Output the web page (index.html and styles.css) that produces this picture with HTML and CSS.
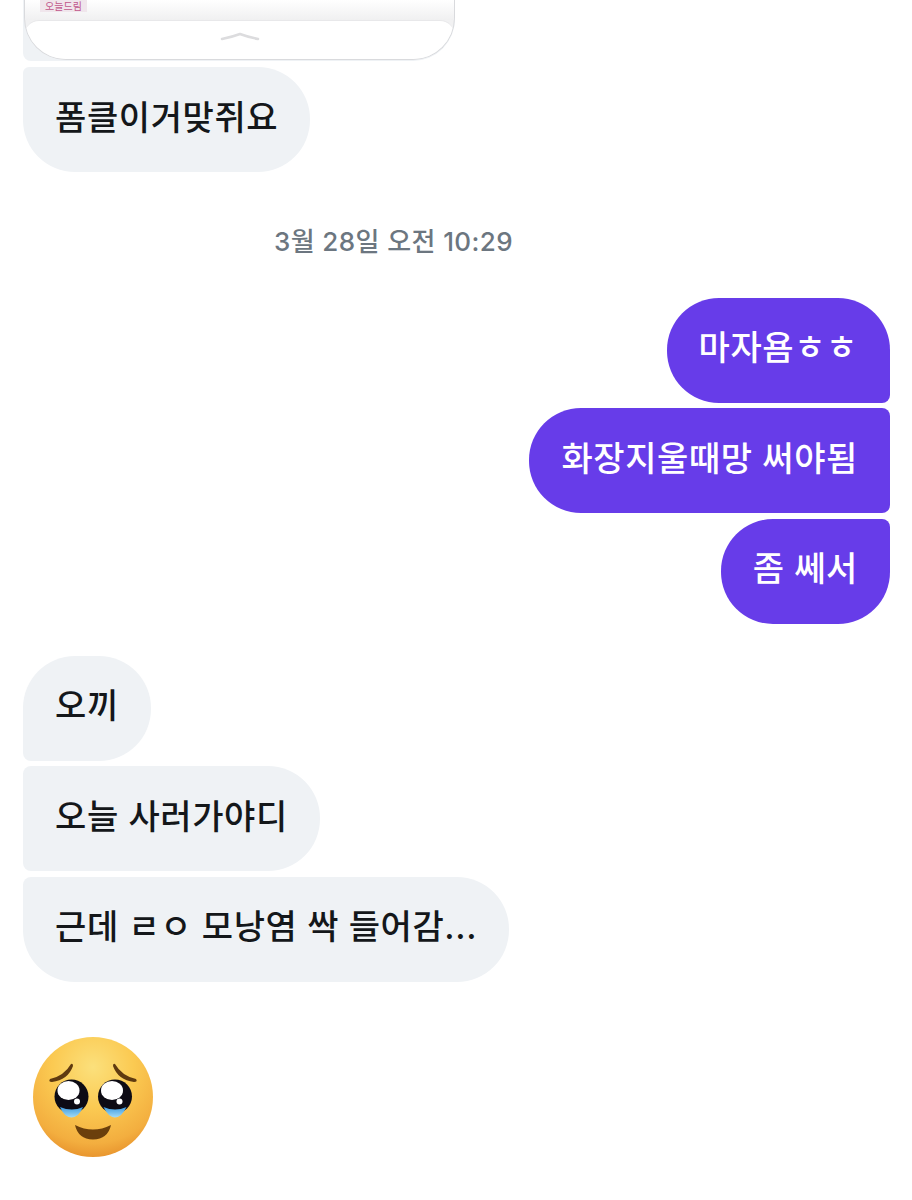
FILE: index.html
```html
<!DOCTYPE html>
<html lang="ko">

<head>
    <meta charset="UTF-8">
    <meta name="viewport" content="width=device-width, initial-scale=1.0">
    <title>Messages</title>
    <link rel="stylesheet" href="styles.css">
</head>

<body>
    <div class="chat">
        <div class="shared-message">
            <div class="shared-card">
                <div class="card-top">
                    <span class="card-tag">오늘드림</span>
                </div>
                <div class="card-handle">
                    <svg width="40" height="10" viewBox="0 0 40 10">
                        <path d="M2 7 Q12 5 20 2 Q28 5 38 7" fill="none" stroke="#dcdcde" stroke-width="2.5" stroke-linecap="round"/>
                    </svg>
                </div>
            </div>
        </div>

        <div class="bubble them first">폼클이거맞쥐요</div>

        <div class="timestamp">3월 28일 오전 10:29</div>

        <div class="group me">
            <div class="bubble mine top">마자욤ㅎㅎ</div>
            <div class="bubble mine mid">화장지울때망 써야됨</div>
            <div class="bubble mine last">좀 쎄서</div>
        </div>

        <div class="group them-group">
            <div class="bubble them top">오끼</div>
            <div class="bubble them mid">오늘 사러가야디</div>
            <div class="bubble them last">근데 ㄹㅇ 모낭염 싹 들어감...</div>
        </div>

        <svg class="emoji" width="124" height="124" viewBox="0 0 124 124">
            <defs>
                <radialGradient id="face" cx="50%" cy="25%" r="75%">
                    <stop offset="0" stop-color="#fbe07c"/>
                    <stop offset="0.45" stop-color="#fbca52"/>
                    <stop offset="0.85" stop-color="#f3ae3f"/>
                    <stop offset="1" stop-color="#e9962f"/>
                </radialGradient>
                <linearGradient id="tear" x1="0" y1="0" x2="0" y2="1">
                    <stop offset="0" stop-color="#3f9be0"/>
                    <stop offset="1" stop-color="#a4dcf5"/>
                </linearGradient>
            </defs>
            <circle cx="62" cy="62" r="60" fill="url(#face)"/>
            <!-- brows -->
            <path d="M19 44 Q33 41 40 29 Q42 28 42 31 Q37 45 21 47 Q17 47 19 44Z" fill="#5f3a10"/>
            <path d="M105 44 Q91 41 84 29 Q82 28 82 31 Q87 45 103 47 Q107 47 105 44Z" fill="#5f3a10"/>
            <!-- eyes -->
            <circle cx="40.5" cy="61.5" r="17" fill="#0d0b14"/>
            <path d="M29 72 Q41 77 52 72 Q48 82 40.5 82.5 Q33 82 29 72Z" fill="url(#tear)"/>
            <ellipse cx="37.5" cy="55.5" rx="11" ry="9.5" fill="#fff"/>
            <circle cx="46" cy="66.5" r="3" fill="#fff"/>
            <circle cx="84" cy="61.5" r="17" fill="#0d0b14"/>
            <path d="M72.500 72 Q84 77 95.500 72 Q91 82 84 82.500 Q77 82 72.500 72Z" fill="url(#tear)"/>
            <ellipse cx="81" cy="55.5" rx="11" ry="9.5" fill="#fff"/>
            <circle cx="88.500" cy="66.5" r="3" fill="#fff"/>
            <!-- mouth -->
            <path d="M44 90 Q62 99 80 90 Q77 104 62 104.500 Q47 104 44 90Z" fill="#6b3f0c"/>
        </svg>
    </div>
</body>

</html>
```

FILE: styles.css
```css
/* Global Styles */
html,
body {
    margin: 0;
    height: 1200px;
    overflow: hidden;
    background-color: #fff;
}

body {
    font-family: 'Inter', 'Noto Sans CJK KR', sans-serif;
}

.chat {
    display: flex;
    flex-direction: column;
    padding: 0 22px 0 23px;
}

/* Shared card at the top */
.shared-message {
    width: 432px;
    height: 61px;
    box-sizing: border-box;
    padding-left: 1px;
    background-color: #eff2f5;
    border-radius: 0 0 42px 8px;
}

.shared-card {
    height: 60px;
    box-sizing: border-box;
    border: 1px solid #d9dadd;
    border-top: none;
    border-radius: 0 0 42px 42px;
    background-color: #f1f1f2;
    overflow: hidden;
}

.card-top {
    height: 20px;
    padding-left: 15px;
    background: linear-gradient(to bottom, #fff, #f0f0f1);
}

.card-tag {
    display: block;
    width: 47px;
    height: 12px;
    background-color: #f0e6ec;
    color: #c0568b;
    font-size: 10px;
    line-height: 12px;
    text-align: center;
}

.card-handle {
    display: flex;
    justify-content: center;
    height: 39px;
    box-sizing: border-box;
    padding-top: 11px;
    background-color: #fff;
    border-top: 1px solid #e8e8ea;
    border-radius: 14px 14px 0 0;
}

/* Bubbles */
.bubble {
    box-sizing: border-box;
    height: 105px;
    padding: 0 32px 4px;
    display: flex;
    align-items: center;
    width: fit-content;
    font-size: 34px;
    font-weight: 500;
    letter-spacing: 0.6px;
    line-height: 1;
    white-space: nowrap;
}

.them {
    background-color: #eff2f5;
    color: #14171a;
}

.mine {
    background-color: #673ce9;
    color: #fff;
}

.first {
    margin-top: 6px;
    border-radius: 6px 52px 52px 52px;
}

.timestamp {
    margin-top: 53px;
    height: 34px;
    line-height: 34px;
    text-align: center;
    color: #6c7680;
    font-size: 26px;
    font-weight: 500;
    letter-spacing: 0.4px;
    padding-right: 126px;
}

.group {
    display: flex;
    flex-direction: column;
    gap: 5.5px;
}

.me {
    margin-top: 38.6px;
    align-items: flex-end;
}

.them-group {
    margin-top: 32.4px;
    align-items: flex-start;
}

.me .top {
    border-radius: 52px 52px 8px 52px;
}

.me .mid {
    border-radius: 52px 8px 8px 52px;
}

.me .last {
    border-radius: 52px 8px 52px 52px;
}

.them-group .top {
    border-radius: 52px 52px 52px 8px;
}

.them-group .mid {
    border-radius: 8px 52px 52px 8px;
}

.them-group .last {
    border-radius: 8px 52px 52px 52px;
}

.emoji {
    margin-top: 53px;
    margin-left: 8px;
}
```
